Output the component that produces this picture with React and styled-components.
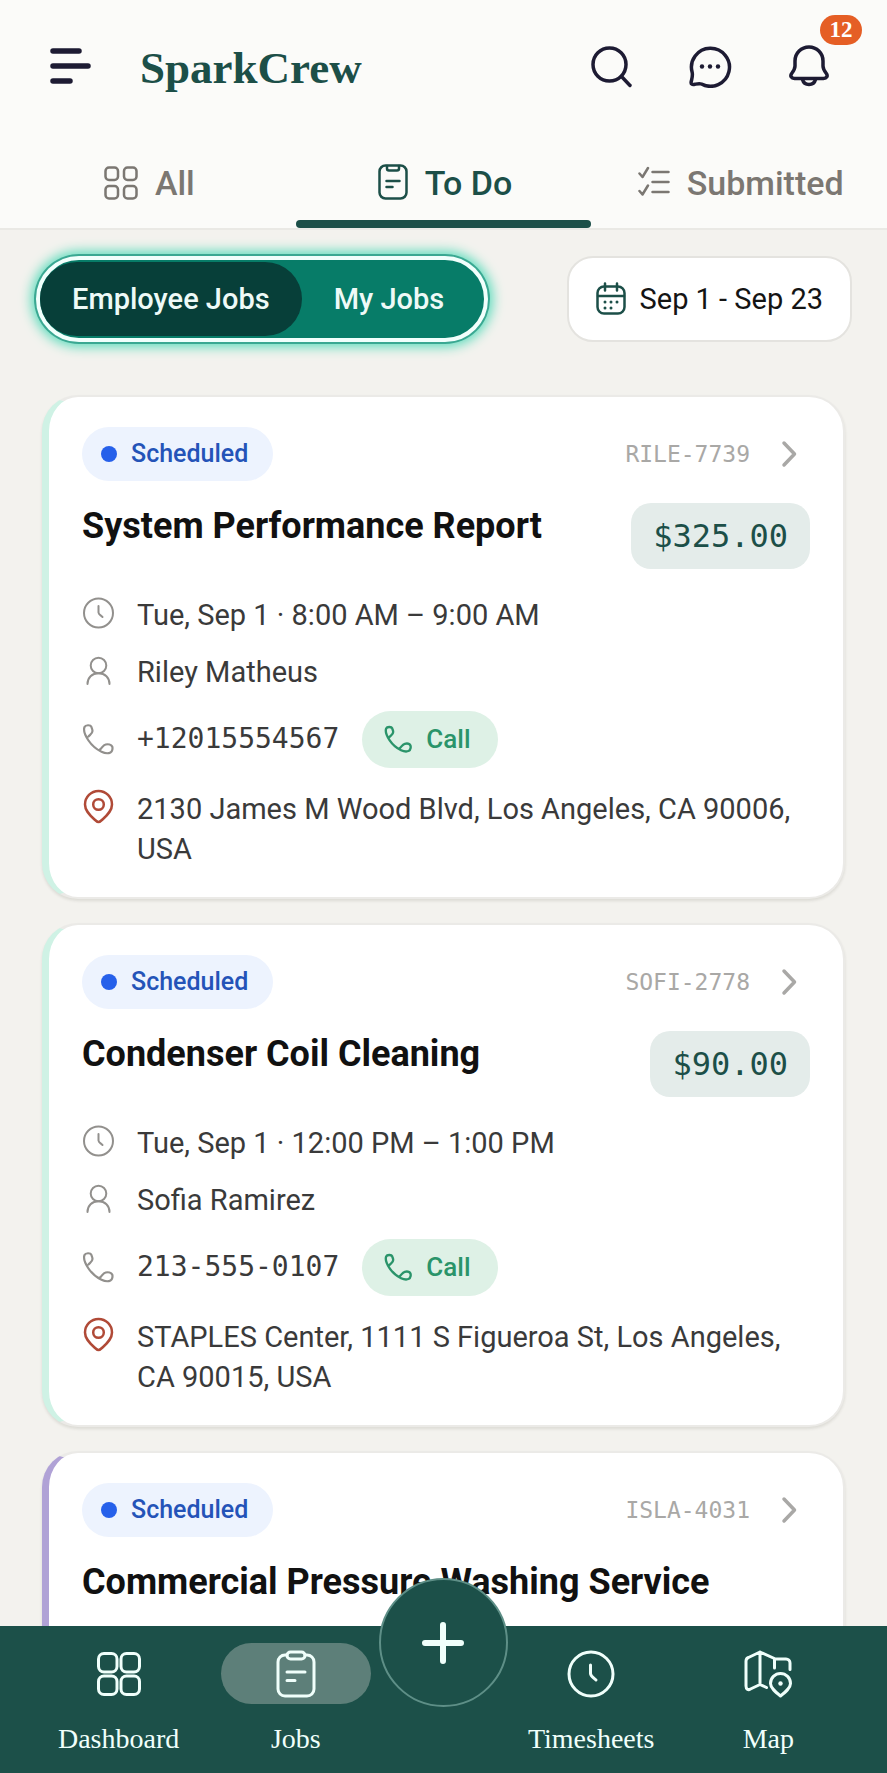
import React from 'react';
import styled, { createGlobalStyle } from 'styled-components';

const SANS = "Roboto, 'Liberation Sans', sans-serif";
const SERIF = "'Liberation Serif', serif";
const MONO = "'DejaVu Sans Mono', 'Liberation Mono', monospace";

const GlobalStyle = createGlobalStyle`
  * {
    box-sizing: border-box;
  }

  body {
    margin: 0;
    background: #f3f2ee;
    font-family: ${SANS};
  }

  button {
    border: 0;
    padding: 0;
    background: none;
    color: inherit;
    font: inherit;
    cursor: pointer;
  }
`;

const Screen = styled.div`
  display: flex;
  flex-direction: column;
  height: 100vh;
  background: #f3f2ee;
`;

const Header = styled.header`
  background: #fbfbf9;
  border-bottom: 2px solid #eae9e5;
`;

const TopBar = styled.div`
  display: flex;
  align-items: center;
  height: 132px;
  padding: 0 56px 0 50px;
`;

const Brand = styled.h1`
  flex: 1;
  margin: 0;
  padding: 4px 0 0 49px;
  font-family: ${SERIF};
  font-size: 45px;
  line-height: 52px;
  font-weight: 700;
  color: #1c4f48;
`;

const IconButton = styled.button`
  display: flex;
  position: relative;
  color: #1d1b33;
`;

const Actions = styled.div`
  display: flex;
  gap: 55px;
`;

const Count = styled.span`
  position: absolute;
  top: -29px;
  right: -31px;
  min-width: 42px;
  border-radius: 15px;
  background: #e55e25;
  color: #fff;
  font-family: ${SERIF};
  font-size: 23px;
  line-height: 30px;
  font-weight: 700;
  text-align: center;
`;

const Tabs = styled.nav`
  display: grid;
  grid-template-columns: repeat(3, 1fr);
`;

const Tab = styled.button`
  display: flex;
  position: relative;
  align-items: center;
  justify-content: center;
  gap: 17px;
  height: 96px;
  padding: 5px 0 0 3px;
  font-size: 34px;
  line-height: 40px;
  font-weight: 500;
  color: ${({ $active }) => ($active ? '#1c4f48' : '#7b7772')};

  &::after {
    content: '';
    display: ${({ $active }) => ($active ? 'block' : 'none')};
    position: absolute;
    left: 0;
    right: 0;
    bottom: 0;
    height: 8px;
    border-radius: 4px;
    background: #1c4f48;
  }
`;

const Main = styled.main`
  flex: 1;
  min-height: 0;
  overflow-y: auto;
  scrollbar-width: none;
`;

const Toolbar = styled.div`
  display: flex;
  align-items: center;
  justify-content: space-between;
  padding: 26px 35px 0 36px;
`;

const Segmented = styled.div`
  display: flex;
  height: 86px;
  padding: 2px 0;
  border: 4px solid #f1fffc;
  border-radius: 43px;
  background: #077c68;
  box-shadow: 0 0 0 2px #3aa892, 0 0 12px 5px #5fdcbd;
`;

const Segment = styled.button`
  padding: ${({ $active }) => ($active ? '0 32px' : '0 40px 0 32px')};
  border-radius: 37px;
  background: ${({ $active }) => ($active ? '#073f39' : 'transparent')};
  color: #eefaf7;
  font-size: 29px;
  font-weight: 500;
`;

const DateButton = styled.button`
  display: flex;
  align-items: center;
  gap: 14px;
  height: 86px;
  padding: 0 27px;
  border: 2px solid #e4e3df;
  border-radius: 26px;
  background: #fff;
  color: #141414;
  font-size: 29px;

  svg {
    color: #1c4f48;
  }
`;

const JobList = styled.div`
  display: flex;
  flex-direction: column;
  gap: 24px;
  padding: 53px 42px 40px 42px;
`;

const Card = styled.article`
  min-height: 504px;
  padding: 30px 33px 28px;
  border: 2px solid #ebeae7;
  border-left: 7px solid ${({ $accent }) => $accent};
  border-radius: 36px;
  background: #fff;
  box-shadow: 0 2px 3px rgba(60, 55, 45, 0.12);
`;

const CardTop = styled.div`
  display: flex;
  align-items: center;
  justify-content: space-between;
`;

const Status = styled.span`
  display: flex;
  align-items: center;
  gap: 14px;
  height: 54px;
  padding: 0 25px 0 19px;
  border-radius: 27px;
  background: #edf3fe;
  color: #2453b8;
  font-size: 25px;
  line-height: 30px;
  font-weight: 500;
`;

const Dot = styled.i`
  width: 16px;
  height: 16px;
  border-radius: 50%;
  background: #2660ea;
`;

const Code = styled.button`
  display: flex;
  align-items: center;
  gap: 24px;
  padding-right: 6px;
  font-family: ${MONO};
  font-size: 23px;
  color: #a9a8a6;
`;

const CardTitle = styled.div`
  display: flex;
  align-items: flex-start;
  justify-content: space-between;
  margin: 22px 0 26px;

  h2 {
    margin: 0;
    font-size: 36px;
    line-height: 46px;
    font-weight: 700;
    color: #111;
  }
`;

const Price = styled.span`
  padding: 0 22px;
  border-radius: 20px;
  background: #e4ecea;
  color: #1c4f48;
  font-family: ${MONO};
  font-size: 32px;
  line-height: 66px;
`;

const Details = styled.ul`
  display: flex;
  flex-direction: column;
  gap: 17px;
  margin: 0;
  padding: 0;
  list-style: none;
`;

const Detail = styled.li`
  display: flex;
  align-items: flex-start;
  gap: 23px;
  font-size: 29px;
  line-height: 40px;
  color: #3a3a3a;

  & > svg {
    flex: none;
    color: #92908d;
  }
`;

const PhoneDetail = styled(Detail)`
  align-items: center;
  min-height: 60px;
  font-family: ${MONO};
  font-size: 28px;
`;

const AddressDetail = styled(Detail)`
  padding-top: 3px;

  & > svg {
    color: #b04a37;
  }
`;

const CallButton = styled.button`
  display: flex;
  align-items: center;
  gap: 14px;
  height: 57px;
  padding: 0 27px 0 22px;
  border-radius: 29px;
  background: #def1e6;
  color: #2a946a;
  font-family: ${SANS};
  font-size: 26px;
  font-weight: 500;
`;

const BottomNav = styled.nav`
  display: grid;
  position: relative;
  grid-template-columns: 3fr 3fr 2fr 3fr 3fr;
  justify-items: center;
  height: 147px;
  padding: 17px 30px 0;
  background: #1c5049;
  color: #f0fffb;
`;

const NavItem = styled.button`
  display: flex;
  flex-direction: column;
  align-items: center;
  align-self: start;
  gap: 18px;
  width: 100%;
  font-family: ${SERIF};
  font-size: 28px;
  line-height: 34px;
`;

const NavIcon = styled.span`
  display: flex;
  align-items: center;
  justify-content: center;
  width: 85%;
  height: 61px;
  border-radius: 31px;
  background: ${({ $active }) => ($active ? '#5d7f79' : 'transparent')};
`;

const AddButton = styled.button`
  display: flex;
  position: absolute;
  top: -48px;
  left: 50%;
  align-items: center;
  justify-content: center;
  width: 129px;
  height: 129px;
  margin-left: -65px;
  border: 2px solid #5e8f87;
  border-radius: 50%;
  background: #1c5049;
`;

const Icon = ({ w, h = w, stroke = 2, children }) => (
  <svg
    width={w}
    height={h}
    viewBox={`0 0 ${w} ${h}`}
    fill="none"
    stroke="currentColor"
    strokeWidth={stroke}
    strokeLinecap="round"
    strokeLinejoin="round"
    aria-hidden="true"
  >
    {children}
  </svg>
);

const MenuIcon = () => (
  <Icon w={41} h={36} stroke={5.5}>
    <path d="M3 3h26M3 18h35M3 33h17" />
  </Icon>
);

const SearchIcon = () => (
  <Icon w={44} stroke={3.5}>
    <circle cx="20.500" cy="20.500" r="16.500" />
    <path d="M32.500 32.500l8.500 9" />
  </Icon>
);

const ChatIcon = () => (
  <Icon w={44} stroke={3.5}>
    <path d="M4.200 28.500A19 19 0 1 1 13.500 40c-2-.8-4-.3-6.500.2-3 .6-4.300 0-3.800-2.500.7-3 1.700-5.700 1-9.200z" />
    <g fill="currentColor" stroke="none">
      <circle cx="14" cy="22.500" r="2.200" />
      <circle cx="22" cy="22.500" r="2.200" />
      <circle cx="30" cy="22.500" r="2.200" />
    </g>
  </Icon>
);

const BellIcon = () => (
  <Icon w={44} stroke={3.5}>
    <path d="M8 17a14 14 0 0 1 28 0v5c0 3 1.500 5 3 7 2.500 3.200.5 5.500-2.500 5.500h-29C4.500 34.500 2.500 32.200 5 29c1.500-2 3-4 3-7z" />
    <path d="M15.500 35.500a6.700 6.500 0 0 0 13 0" />
  </Icon>
);

const GridIcon = ({ w, cell, r, stroke }) => (
  <Icon w={w} stroke={stroke}>
    {[1.5, w - cell - 1.5].map(x =>
      [1.5, w - cell - 1.5].map(y => (
        <rect key={`${x}-${y}`} x={x} y={y} width={cell} height={cell} rx={r} />
      ))
    )}
  </Icon>
);

const TodoIcon = () => (
  <Icon w={30} h={38} stroke={2.5}>
    <rect x="1.500" y="1.500" width="27" height="33" rx="6" />
    <path d="M9 2v2.500a2 2 0 0 0 2 2h8a2 2 0 0 0 2-2V2M8.500 17h13M8.500 23h6" />
  </Icon>
);

const JobsIcon = () => (
  <Icon w={40} h={48} stroke={3}>
    <path d="M11 5H9a7 7 0 0 0-7 7v27a7 7 0 0 0 7 7h22a7 7 0 0 0 7-7V12a7 7 0 0 0-7-7h-2" />
    <rect x="11" y="2" width="18" height="7" rx="3.500" />
    <path d="M11 22h18M11 30.500h8" />
  </Icon>
);

const ChecklistIcon = () => (
  <Icon w={32} h={34} stroke={2.5}>
    <path d="M1.500 7.500l3 3.500L10 2M1.500 25l3 3.500L10 19.500M14.500 6h16M14.500 16h16M14.500 26h16" />
  </Icon>
);

const CalendarIcon = () => (
  <Icon w={30} h={34} stroke={2.5}>
    <rect x="1.500" y="4.500" width="27" height="27" rx="6.500" />
    <path d="M9 1.500v7M21 1.500v7M2 14h26" />
    <g fill="currentColor" stroke="none">
      <circle cx="9" cy="20" r="1.500" />
      <circle cx="15" cy="20" r="1.500" />
      <circle cx="21" cy="20" r="1.500" />
      <circle cx="9" cy="26" r="1.500" />
      <circle cx="15" cy="26" r="1.500" />
    </g>
  </Icon>
);

const ClockIcon = () => (
  <Icon w={32} h={36}>
    <circle cx="16.500" cy="18" r="14.500" />
    <path d="M16.500 11v6.500c0 2 2 2.500 4 4.500" />
  </Icon>
);

const TimesheetIcon = () => (
  <Icon w={48} stroke={3}>
    <circle cx="24" cy="24" r="22" />
    <path d="M23.500 15v8.500c0 2.500 3 4 5.500 6.500" />
  </Icon>
);

const UserIcon = () => (
  <Icon w={32} h={36}>
    <circle cx="16.500" cy="13.500" r="7.800" />
    <path d="M5.500 32c0-6.500 4.500-10.700 11-10.700s11 4.200 11 10.700" />
  </Icon>
);

const PhoneIcon = ({ size = 32 }) => (
  <svg
    width={size}
    height={size}
    viewBox="0 0 32 32"
    fill="none"
    stroke="currentColor"
    strokeWidth={size < 32 ? 2.7 : 2.2}
    strokeLinecap="round"
    strokeLinejoin="round"
    aria-hidden="true"
  >
    <path d="M6.500 13.500c1.300-1.600 4-2.800 4-5.500 0-1.700-.8-3-1.200-4.300-.7-2-5.800-2-6.800.3C1.300 7 3.500 13 6.500 17.500c3.200 4.700 7.800 8.800 13 11.300 3 1.400 6.800 1.800 9 .7 2-1 2.300-4.500 1.700-6-.9-2-4.200-2.500-6.500-2-2.700.6-3.700 3.500-5.700 5" />
  </svg>
);

const PinIcon = () => (
  <Icon w={32} h={36} stroke={2.5}>
    <path d="M16.500 33c-1.500 0-2.500-1-4-2.500C6.500 25 3 21 3 15.500a13.500 13.500 0 0 1 27 0c0 5.500-3.500 9.500-9.500 15-1.500 1.500-2.500 2.500-4 2.500z" />
    <circle cx="16.500" cy="15.500" r="5.300" />
  </Icon>
);

const MapIcon = () => (
  <Icon w={48} stroke={3}>
    <path d="M46 19.500V13a4 4 0 0 0-4-4H31.500L16 2 4.500 7.500A4 4 0 0 0 2 11v25c0 3 2 4.500 4.500 3L16 34.500l6.500 3M16 2v32M30.500 9v9" />
    <path d="M36.500 46c-5-4-10-8-10-12.500a10 10 0 0 1 20 0c0 4.500-5 8.500-10 12.500z" />
    <circle cx="36.500" cy="33.500" r="2.200" fill="currentColor" stroke="none" />
  </Icon>
);

const ChevronIcon = () => (
  <Icon w={30} stroke={3.5}>
    <path d="M10 4l10.500 11L10 26" />
  </Icon>
);

const PlusIcon = () => (
  <Icon w={44} stroke={6}>
    <path d="M22 4v36M4 22h36" />
  </Icon>
);

const jobs = [
  {
    code: 'RILE-7739',
    title: 'System Performance Report',
    price: '$325.00',
    time: 'Tue, Sep 1 · 8:00 AM – 9:00 AM',
    person: 'Riley Matheus',
    phone: '+12015554567',
    address: '2130 James M Wood Blvd, Los Angeles, CA 90006, USA',
    accent: '#cff2e5',
  },
  {
    code: 'SOFI-2778',
    title: 'Condenser Coil Cleaning',
    price: '$90.00',
    time: 'Tue, Sep 1 · 12:00 PM – 1:00 PM',
    person: 'Sofia Ramirez',
    phone: '213-555-0107',
    address: 'STAPLES Center, 1111 S Figueroa St, Los Angeles, CA 90015, USA',
    accent: '#cff2e5',
  },
  {
    code: 'ISLA-4031',
    title: 'Commercial Pressure Washing Service',
    accent: '#b0a2d6',
  },
];

const JobCard = ({ job }) => (
  <Card $accent={job.accent}>
    <CardTop>
      <Status>
        <Dot />
        Scheduled
      </Status>
      <Code>
        {job.code}
        <ChevronIcon />
      </Code>
    </CardTop>
    <CardTitle>
      <h2>{job.title}</h2>
      {job.price && <Price>{job.price}</Price>}
    </CardTitle>
    {job.time && (
      <Details>
        <Detail>
          <ClockIcon />
          {job.time}
        </Detail>
        <Detail>
          <UserIcon />
          {job.person}
        </Detail>
        <PhoneDetail>
          <PhoneIcon />
          {job.phone}
          <CallButton>
            <PhoneIcon size={28} />
            Call
          </CallButton>
        </PhoneDetail>
        <AddressDetail>
          <PinIcon />
          {job.address}
        </AddressDetail>
      </Details>
    )}
  </Card>
);

export default () => (
  <>
    <GlobalStyle />
    <Screen>
      <Header>
        <TopBar>
          <IconButton aria-label="Menu">
            <MenuIcon />
          </IconButton>
          <Brand>SparkCrew</Brand>
          <Actions>
            <IconButton aria-label="Search">
              <SearchIcon />
            </IconButton>
            <IconButton aria-label="Messages">
              <ChatIcon />
            </IconButton>
            <IconButton aria-label="Notifications">
              <BellIcon />
              <Count>12</Count>
            </IconButton>
          </Actions>
        </TopBar>
        <Tabs>
          <Tab>
            <GridIcon w={34} cell={12.5} r={3.5} stroke={2.5} />
            All
          </Tab>
          <Tab $active>
            <TodoIcon />
            To Do
          </Tab>
          <Tab>
            <ChecklistIcon />
            Submitted
          </Tab>
        </Tabs>
      </Header>

      <Main>
        <Toolbar>
          <Segmented>
            <Segment $active>Employee Jobs</Segment>
            <Segment>My Jobs</Segment>
          </Segmented>
          <DateButton>
            <CalendarIcon />
            Sep 1 - Sep 23
          </DateButton>
        </Toolbar>
        <JobList>
          {jobs.map(job => (
            <JobCard key={job.code} job={job} />
          ))}
        </JobList>
      </Main>

      <BottomNav>
        <NavItem>
          <NavIcon>
            <GridIcon w={44} cell={18.5} r={5.5} stroke={3} />
          </NavIcon>
          Dashboard
        </NavItem>
        <NavItem>
          <NavIcon $active>
            <JobsIcon />
          </NavIcon>
          Jobs
        </NavItem>
        <span />
        <NavItem>
          <NavIcon>
            <TimesheetIcon />
          </NavIcon>
          Timesheets
        </NavItem>
        <NavItem>
          <NavIcon>
            <MapIcon />
          </NavIcon>
          Map
        </NavItem>
        <AddButton aria-label="Add job">
          <PlusIcon />
        </AddButton>
      </BottomNav>
    </Screen>
  </>
);
